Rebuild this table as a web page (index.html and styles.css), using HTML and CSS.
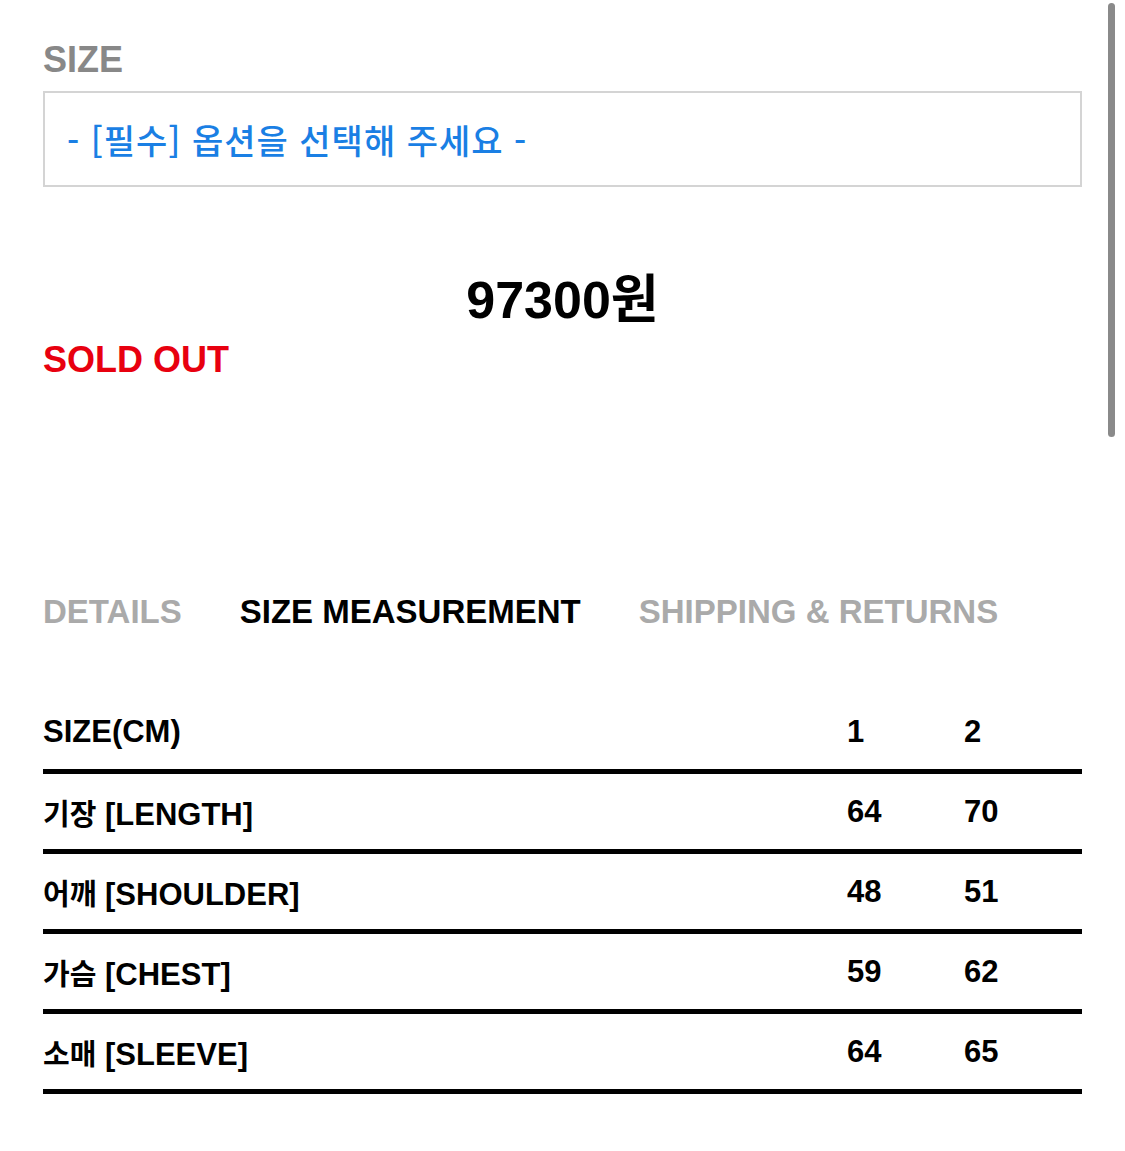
FILE: index.html
```html
<!DOCTYPE html>
<html lang="ko">
<head>
    <meta charset="UTF-8">
    <meta name="viewport" content="width=device-width, initial-scale=1.0">
    <title>Size</title>
    <link rel="stylesheet" href="styles.css">
</head>
<body>
    <div class="option-label">SIZE</div>
    <div class="option-select">- [필수] 옵션을 선택해 주세요 -</div>

    <div class="price">97300원</div>
    <div class="sold-out">SOLD OUT</div>

    <div class="tabs">
        <span class="tab">DETAILS</span>
        <span class="tab active">SIZE MEASUREMENT</span>
        <span class="tab">SHIPPING &amp; RETURNS</span>
    </div>

    <div class="size-table">
        <div class="row">
            <span>SIZE(CM)</span>
            <span>1</span>
            <span>2</span>
        </div>
        <div class="row">
            <span><span class="ko">기장</span> [LENGTH]</span>
            <span>64</span>
            <span>70</span>
        </div>
        <div class="row">
            <span><span class="ko">어깨</span> [SHOULDER]</span>
            <span>48</span>
            <span>51</span>
        </div>
        <div class="row">
            <span><span class="ko">가슴</span> [CHEST]</span>
            <span>59</span>
            <span>62</span>
        </div>
        <div class="row">
            <span><span class="ko">소매</span> [SLEEVE]</span>
            <span>64</span>
            <span>65</span>
        </div>
    </div>

    <div class="scrollbar"></div>
</body>
</html>
```

FILE: styles.css
```css
body {
    font-family: "Liberation Sans", "Noto Sans CJK KR", sans-serif;
    margin: 0;
    padding: 40px 43px 0;
    background-color: #fff;
    color: #000;
}

.option-label {
    font-size: 36px;
    line-height: 40px;
    font-weight: bold;
    color: #888;
}

.option-select {
    margin-top: 11px;
    height: 92px;
    border: 2px solid #d4d4d4;
    display: flex;
    align-items: center;
    padding-left: 22px;
    font-family: "Noto Sans CJK KR", sans-serif;
    font-size: 34px;
    font-weight: 500;
    letter-spacing: 1px;
    color: #1a7fe4;
}

.price {
    margin-top: 83px;
    text-align: center;
    font-size: 52px;
    line-height: 60px;
    font-weight: bold;
}

.sold-out {
    margin-top: 10px;
    font-size: 36px;
    line-height: 40px;
    font-weight: bold;
    color: #e8000f;
}

.tabs {
    margin-top: 212px;
    display: flex;
    gap: 58px;
    font-size: 33px;
    line-height: 40px;
    font-weight: bold;
}

.tab {
    color: #aaa;
}

.tab.active {
    color: #000;
}

.size-table {
    margin-top: 62px;
}

.row {
    display: grid;
    grid-template-columns: 1fr 117px 118px;
    align-items: center;
    height: 75px;
    border-bottom: 5px solid #000;
    font-size: 31px;
    font-weight: bold;
}

.ko {
    font-family: "Noto Sans CJK KR", sans-serif;
    font-size: 29px;
}

.scrollbar {
    position: fixed;
    top: 3px;
    right: 10px;
    width: 7px;
    height: 434px;
    border-radius: 4px;
    background-color: #8a8a8a;
}
```
